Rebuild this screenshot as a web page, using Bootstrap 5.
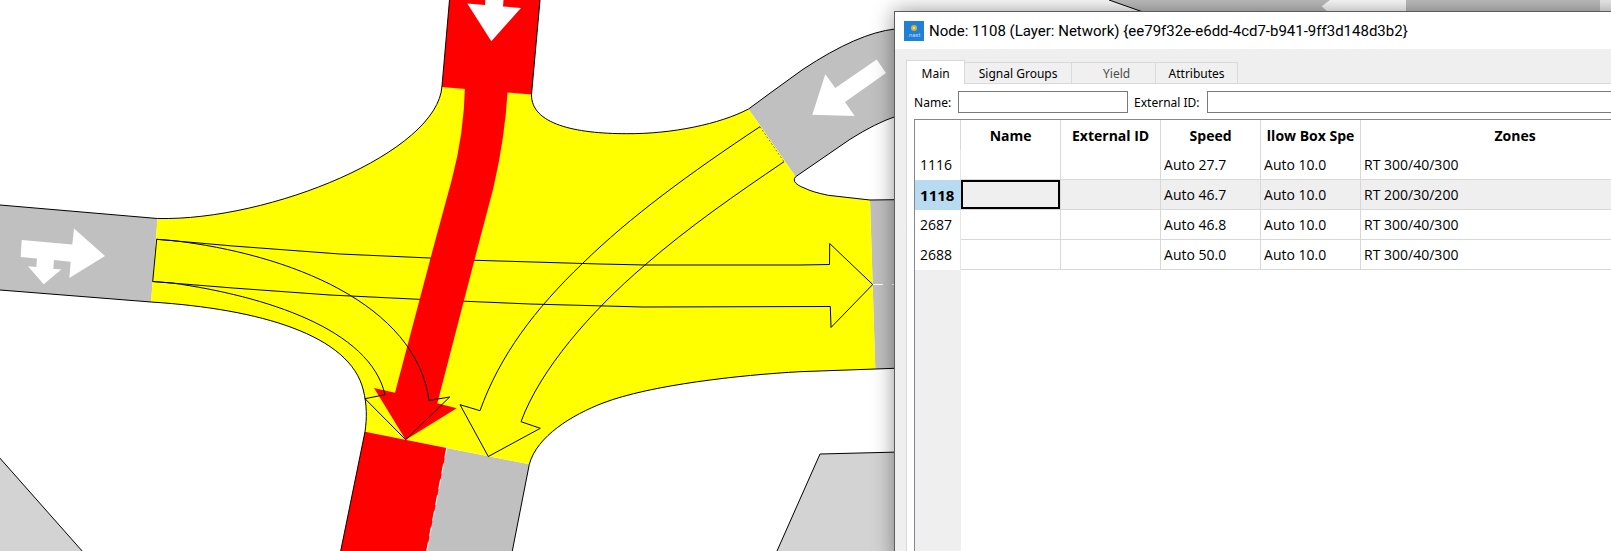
<!DOCTYPE html>
<html lang="en">
<head>
<meta charset="utf-8">
<meta name="viewport" content="width=device-width, initial-scale=1">
<title>Node: 1108</title>
<link rel="stylesheet" href="https://cdn.jsdelivr.net/npm/bootstrap@5.3.0/dist/css/bootstrap.min.css">
<style>
  body { background: #fff; color: #000; font-family: "Open Sans", sans-serif; font-size: 14px; line-height: 20px; }
  .desk { min-height: 100vh; }
  .road-map { inset: 0; }
  .node-window { left: 55.5%; right: -80px; top: 11px; bottom: -12px; background: #efefef; border: 1px solid #5c5c5c; box-shadow: 0 0 20px rgba(0, 0, 0, .42); }
  .title-strip { height: 37px; padding-left: 9px; gap: 5px; background: #fff; font-family: Roboto, "Open Sans", sans-serif; font-size: 15px; line-height: 24px; }
  .node-body { padding: 11px 11px 0; }
  .tab-strip { font-family: "Noto Sans", sans-serif; font-size: 12px; line-height: 16px; height: 23px; }
  .tab-strip button { border: 1px solid #d9d9d9; border-left-width: 0; border-bottom-width: 0; background: #f0f0f0; color: #000; padding: 2px 0 0; height: 21px; }
  .tab-strip button.active { border-left-width: 1px; background: #fff; height: 24px; margin-bottom: -1px; z-index: 1; position: relative; width: 59px; }
  .tab-strip button:disabled { color: #4d4d4d; }
  .tab-groups { width: 107px; }
  .tab-strip .tab-yield { width: 84px; padding-left: 6px; }
  .tab-attrs { width: 82px; }
  .pane { border: 1px solid #d9d9d9; background: #fff; padding: 7px 7px 0; }
  .fields { font-family: "Noto Sans", sans-serif; font-size: 12px; line-height: 24px; height: 22px; margin-bottom: 6px; }
  .fields input { height: 22px; border: 1px solid #7a7a7a; background: #fff; padding: 0 4px; border-radius: 0; }
  .label-name { width: 44px; }
  .label-ext { width: 73px; margin-left: 6px; }
  .input-name { width: 170px; }
  .grid-box { border: 1px solid #828790; }
  .node-grid { table-layout: fixed; border-collapse: separate; border-spacing: 0; width: 100%; }
  .node-grid th, .node-grid td { height: 30px; padding: 0 3px; border-right: 1px solid #d8d8d8; white-space: nowrap; overflow: hidden; }
  .node-grid td { border-bottom: 1px solid #d8d8d8; }
  .node-grid thead th { text-align: center; font-weight: 700; padding: 2px 5px 0; }
  .node-grid tbody th { font-weight: 400; padding: 0 5px; border-right-color: #e6e6e6; }
  .node-grid tr.current td { background: #efefef; }
  .node-grid tr.current th { background: #b9dbf2; border-right-color: #b9dbf2; font-size: 15px; font-weight: 700; }
  .node-grid td.cell-focus { box-shadow: inset 0 0 0 2px #000; }
  .col-id { width: 46px; }
  .col-data { width: 100px; }
  .id-gutter { width: 46px; background: #efefef; }
</style>
</head>
<body>
<main class="desk position-relative overflow-hidden">
  <svg class="road-map position-absolute w-100 h-100" viewBox="0 0 1611 551" preserveAspectRatio="xMinYMin slice" role="img" aria-label="Junction map">
    <!-- background areas -->
    <g fill="#d3d3d3" stroke="#000">
      <path d="M-2 456L83 552V560H-2z"/>
      <path d="M777 551L820 454L900 452V560H773z"/>
    </g>
    <!-- roads -->
    <g fill="#c0c0c0">
      <path d="M0 205L157.5 218.5L151 302L0 290z"/>
      <path d="M748.5 109L773 91L803 69.3Q858 33 895 29L940 20V100L895 116.7Q876 123 850 139.3L795.7 176.7z"/>
      <path d="M870 200H910V368L875.3 369z"/>
      <path d="M446.7 448L529.3 464.3L512.3 551H426.7z"/>
      <path d="M1109 0L1143 12H1600V0z"/>
    </g>
    <path fill="#f0f0f0" d="M1600 0H1611V12H1600z"/>
    <path fill="#fff" d="M1321.7 6.3L1330 0H1406V12H1328z"/>
    <!-- junction surface -->
    <path fill="#ff0" d="M157.5 218.5C270 221 438 152 442 86L531.5 94.5C531 124 575 133.7 626.7 133.7C672 134 720 124 748.5 109L795.7 176.7C792 181 796 185 805 188.3Q812 192 828.3 195.3L870 200L875.3 369L800 371.7C740 375 650 385 603 403C572 415 537 436 529.3 464.3L365 431.7C367 418 367 405 363.3 390C350 335 260 309 151 302z"/>
    <!-- turning lanes under the active one -->
    <g fill="none" stroke="#000">
      <path d="M156.7 239.3L233 246L340 254L430 258L476 260.3L600 264L646 265H800L829.5 264.5L829.7 243.5L872.7 284.5L831 327.5L830.3 306.5L643 307L530 304L419 299.3L330 295L233 288L152.7 281.5z"/>
      <path d="M760 126.7C690 173 630 217 582.7 263.3C535 309 500 355 480 410.7L460 404.7L488.3 456.5L540.3 428.3L521 421.7C540 370 590 312 645 265C690 226 735 195 784 161.7"/>
      <path stroke="#777" stroke-dasharray="2 2" d="M760 126.7L784 161.7"/>
    </g>
    <!-- active route -->
    <g fill="#f00">
      <path d="M449.5 0H540L531.5 94.5L442 87z"/>
      <path d="M465 86Q464 134 451.7 180L433 249L395 392.7L374 388L405.7 439.7L456.7 408.3L437.3 403.3L476 254L493.3 188.3Q505 138 507.7 90z"/>
      <path d="M365 431.7L446.7 448L426.7 551H340.7z"/>
    </g>
    <path fill="none" stroke="#000" d="M156.7 239.3L172 240.5C290 254 416 304 429 400.5L449.7 397L405.7 439.7L365 398.7L385 394.7C370 329 265 296 172 283L152.7 281.5"/>
    <!-- kerbs -->
    <g fill="none" stroke="#000">
      <path d="M0 205L157.5 218.5C270 221 438 152 442 86L449.5 0"/>
      <path d="M540 0L531.5 94.5C531 124 575 133.7 626.7 133.7C672 134 720 124 748.5 109L773 91L803 69.3Q858 33 895 29"/>
      <path d="M895 116.7Q876 123 850 139.3L795.7 176.7C792 181 796 185 805 188.3Q812 192 828.3 195.3L870 200L895 199.7"/>
      <path d="M895 368.3L800 371.7C740 375 650 385 603 403C572 415 537 436 529.3 464.3L512.3 551"/>
      <path d="M0 290L151 302C260 309 350 335 363.3 390C367 405 367 418 365 431.7L340.7 551"/>
      <path d="M1109 0L1143 12"/>
    </g>
    <!-- lane markings -->
    <path fill="none" stroke="#fff" stroke-dasharray="10 9" d="M873 284.5H895"/>
    <path fill="none" stroke="#fff" stroke-dasharray="10 6" d="M446.7 448L426.7 551"/>
    <g fill="#fff">
      <path d="M21.7 240L72.3 244.6L74 228.4L105 256L69.3 278L70.7 261.8L54 260L53.3 268.8L61.3 269.5L43.7 284.3L28 266.3L36.3 267L37 258.6L20.7 256.9z"/>
      <path d="M485.3 0L485 5L467.3 3.5L491.3 41.3L521 8L503 6.5L503.5 0z"/>
      <path d="M876.7 59.5L886 73L845 102L854.7 116L812.3 114.7L825.3 74.3L835.3 88z"/>
    </g>
  </svg>

  <section class="node-window position-absolute d-flex flex-column" aria-label="Node 1108">
    <header class="title-strip d-flex align-items-center flex-shrink-0">
      <svg width="20" height="20" viewBox="0 0 20 20" aria-hidden="true">
        <rect width="20" height="20" fill="#1f80d6"/>
        <circle cx="10" cy="7" r="2" fill="#123f78" stroke="#e3b02c" stroke-width="2"/>
        <circle cx="10" cy="7" r="1" fill="#fff"/>
        <text x="10" y="16" text-anchor="middle" font-size="6" fill="#b9d9f5">.next</text>
      </svg>
      <span class="text-nowrap">Node: 1108 (Layer: Network) {ee79f32e-e6dd-4cd7-b941-9ff3d148d3b2}</span>
    </header>
    <div class="node-body d-flex flex-column flex-grow-1">
      <div class="tab-strip d-flex align-items-end" role="tablist">
        <button class="active" type="button" role="tab" aria-selected="true">Main</button>
        <button class="tab-groups" type="button" role="tab">Signal Groups</button>
        <button class="tab-yield" type="button" role="tab" disabled>Yield</button>
        <button class="tab-attrs" type="button" role="tab">Attributes</button>
      </div>
      <div class="pane d-flex flex-column flex-grow-1" role="tabpanel">
        <div class="fields d-flex">
          <label class="label-name" for="nodeName">Name:</label>
          <input class="input-name" id="nodeName" type="text">
          <label class="label-ext" for="nodeExt">External ID:</label>
          <input class="flex-grow-1" id="nodeExt" type="text">
        </div>
        <div class="grid-box d-flex flex-column flex-grow-1">
          <table class="node-grid">
            <colgroup><col class="col-id"><col class="col-data"><col class="col-data"><col class="col-data"><col class="col-data"><col></colgroup>
            <thead>
              <tr><th></th><th>Name</th><th>External ID</th><th>Speed</th><th>llow Box Spe</th><th>Zones</th></tr>
            </thead>
            <tbody>
              <tr><th scope="row">1116</th><td></td><td></td><td>Auto 27.7</td><td>Auto 10.0</td><td>RT 300/40/300</td></tr>
              <tr class="current"><th scope="row">1118</th><td class="cell-focus"></td><td></td><td>Auto 46.7</td><td>Auto 10.0</td><td>RT 200/30/200</td></tr>
              <tr><th scope="row">2687</th><td></td><td></td><td>Auto 46.8</td><td>Auto 10.0</td><td>RT 300/40/300</td></tr>
              <tr><th scope="row">2688</th><td></td><td></td><td>Auto 50.0</td><td>Auto 10.0</td><td>RT 300/40/300</td></tr>
            </tbody>
          </table>
          <div class="id-gutter flex-grow-1"></div>
        </div>
      </div>
    </div>
  </section>
</main>
<script src="https://cdn.jsdelivr.net/npm/bootstrap@5.3.0/dist/js/bootstrap.bundle.min.js"></script>
</body>
</html>
